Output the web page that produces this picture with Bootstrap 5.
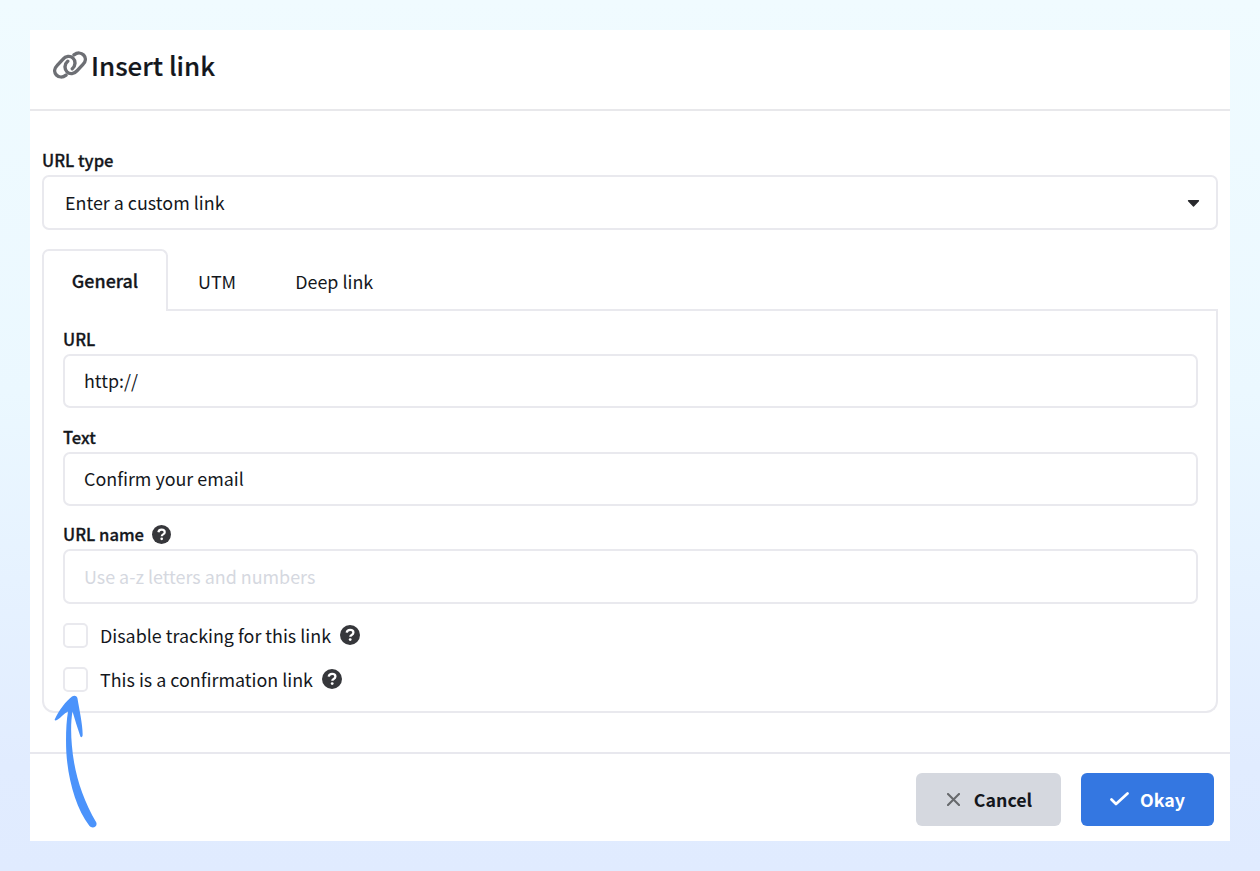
<!DOCTYPE html>
<html lang="en">
<head>
<meta charset="utf-8">
<meta name="viewport" content="width=device-width, initial-scale=1">
<title>Insert link</title>
<link href="https://cdn.jsdelivr.net/npm/bootstrap@5.3.0/dist/css/bootstrap.min.css" rel="stylesheet">
<style>
:root{--line:#e9e9ee;--ink:#14171c}
body{height:871px;padding:30px;overflow:hidden;color:var(--ink);font-family:"Noto Sans CJK SC",sans-serif;font-size:17.9px;line-height:26px;background:linear-gradient(180deg,#f0fbff 0%,#ebf8ff 45%,#e1ecff 88%,#e0ebff 100%)}
.dialog{height:811px;background:#fff}
.dialog-head{height:81px;padding:0 23px 9px;gap:4px;border-bottom:2px solid #e8e8eb}
.dialog-head h1{font-size:25.9px;font-weight:500;line-height:38px;-webkit-text-stroke:.2px}
.dialog-main{height:641px;padding:36px 12px 0}
.dialog-foot{height:89px;padding:4px 16px 0;gap:20px;border-top:2px solid #e8e8ee}
.field-label{display:flex;align-items:center;height:26px;margin-bottom:2px;font-size:16.6px;font-weight:500;gap:8px;-webkit-text-stroke:.3px}
.form-control,.form-select{height:54px;padding:0 20px 1px 19px;border:2px solid var(--line);border-radius:7px;color:var(--ink);font-size:17.9px;line-height:26px}
.tab-pane-box .form-control{width:1135px;padding-bottom:2px}
.tab-pane-box .name-input{height:55px}
.form-control::placeholder{color:#d5d8e0;opacity:1}
.form-select{height:55px;padding:0 21px 2px;background-image:none}
.caret{right:18px;top:24px}
.nav-tabs{margin-top:19px;border:0;height:62px}
.nav-tabs .nav-link{height:62px;border:2px solid transparent;border-radius:7px 7px 0 0;color:var(--ink);padding:2px 0 0 28px;font-size:17.9px}
.nav-tabs .nav-link.deep{padding-left:55px}
.nav-tabs .nav-link.active{width:126px;padding:0 0 2px;border-color:var(--line);border-bottom:0;font-weight:500;color:var(--ink);position:relative;z-index:1;-webkit-text-stroke:.3px}
.tab-pane-box{height:404px;margin-top:-2px;padding:17px 19px 0;border:2px solid var(--line);border-top:0;border-radius:0 0 12px 12px;background:linear-gradient(var(--line),var(--line)) 100% 0/calc(100% - 123px) 2px no-repeat}
.name-label{margin-top:15px}
.form-check .form-check-input{width:25px;height:25px;border:2px solid var(--line);border-radius:5px;margin:0;float:none}
.form-check{min-height:0;height:25px;padding:0;margin:19px 0 0;gap:8px}
.form-check label{margin:-1px 1px 0 4px}
.form-check svg{margin-top:-1px}
.btn{height:53px;border:0;border-radius:6px;font-size:17.8px;font-weight:700;padding:0}
.btn svg{margin-top:-1px}
.btn-cancel,.btn-cancel:hover{width:145px;padding-left:2px;background:#d5d8df;color:var(--ink);gap:14px}
.btn-okay,.btn-okay:hover{width:133px;background:#3477e1;color:#fff;gap:11px}
.pointer{left:50px;top:690px}
</style>
</head>
<body>
<svg class="d-none" xmlns="http://www.w3.org/2000/svg">
<symbol id="help" viewBox="0 0 20 20"><circle cx="10" cy="10" r="10" fill="#36373b"/><path d="M6.700 7.600C7 5.900 8.300 4.900 10.100 4.900c1.900 0 3.300 1 3.300 2.600 0 1.100-.6 1.800-1.700 2.400-.9.500-1.400.9-1.400 1.900" fill="none" stroke="#fff" stroke-width="2.300"/><circle cx="10.200" cy="14.600" r="1.400" fill="#fff"/></symbol>
</svg>
<div class="dialog">
  <header class="dialog-head d-flex align-items-center">
    <svg width="34" height="28" viewBox="0 0 34 28" fill="none" stroke="#6d6f74" stroke-width="3.400" stroke-linecap="round"><path d="M21 3.900C24.400 1.300 28.300 1.600 30.600 4c2.600 2.800 2.100 6.700-.6 9.400l-5.800 6.300c-2.900 3.400-7.400 3.900-10.200 1.200-2.900-2.800-2.600-7.900.7-10.700"/><path d="M13 24.100c-3.400 2.600-7.300 2.300-9.600-.1-2.600-2.800-2.100-6.700.6-9.400l5.800-6.300c2.900-3.400 7.400-3.900 10.200-1.200 2.900 2.800 2.600 7.900-.7 10.700"/></svg>
    <h1 class="m-0">Insert link</h1>
  </header>
  <main class="dialog-main">
    <label class="field-label" for="type">URL type</label>
    <div class="position-relative">
      <div id="type" class="form-select d-flex align-items-center">Enter a custom link</div>
      <svg class="caret position-absolute" width="13" height="9" viewBox="0 0 13 9"><path d="M1.500 1.700h10L6.500 7z" fill="#28292c" stroke="#28292c" stroke-width="1.300" stroke-linejoin="round"/></svg>
    </div>
    <ul class="nav nav-tabs">
      <li class="nav-item"><a class="nav-link active d-flex align-items-center justify-content-center">General</a></li>
      <li class="nav-item"><a class="nav-link d-flex align-items-center">UTM</a></li>
      <li class="nav-item"><a class="nav-link deep d-flex align-items-center">Deep link</a></li>
    </ul>
    <section class="tab-pane-box">
      <label class="field-label" for="url">URL</label>
      <input id="url" class="form-control" value="http://">
      <label class="field-label mt-3" for="text">Text</label>
      <input id="text" class="form-control" value="Confirm your email">
      <label class="field-label name-label" for="name">URL name <svg width="19" height="19"><use href="#help"/></svg></label>
      <input id="name" class="form-control name-input" placeholder="Use a-z letters and numbers">
      <div class="form-check d-flex align-items-center">
        <input class="form-check-input" type="checkbox" id="track"><label for="track">Disable tracking for this link</label><svg width="20" height="20"><use href="#help"/></svg>
      </div>
      <div class="form-check d-flex align-items-center">
        <input class="form-check-input" type="checkbox" id="confirm"><label for="confirm">This is a confirmation link</label><svg width="20" height="20"><use href="#help"/></svg>
      </div>
    </section>
  </main>
  <footer class="dialog-foot d-flex align-items-center justify-content-end">
    <button class="btn btn-cancel d-flex align-items-center justify-content-center"><svg width="13" height="13" viewBox="0 0 13 13" stroke="#67696d" stroke-width="2.100" stroke-linecap="round"><path d="M1 1l11 11M12 1L1 12"/></svg>Cancel</button>
    <button class="btn btn-okay d-flex align-items-center justify-content-center"><svg width="19" height="14" viewBox="0 0 19 14" fill="none" stroke="#fff" stroke-width="2.700" stroke-linecap="round" stroke-linejoin="round"><path d="M1.500 7.500l4.500 4.500L17.500 1.500"/></svg>Okay</button>
  </footer>
</div>
<svg class="pointer position-absolute" width="50" height="142" viewBox="0 0 50 142" fill="#4b93fb"><path d="M4.700 29.500C9 20 16 11 22 6.500c2.500-1.600 5-.8 5.500 2C29 18 33 36 32.600 45.500c-.5 2-1.700 2.200-2.300.8C27.500 38 25 30 22.500 21.500c-1.700 10-1.700 22-.6 34C24 82 32 108 46.300 132.500c1.500 4-3.800 7-7 3.300C26 118 18 90 16.300 62c-.6-13-.3-29 1.700-40.500-4 2-7 6-11 8.500-1.500.7-2.500.4-2.300-.5z"/></svg>
<script src="https://cdn.jsdelivr.net/npm/bootstrap@5.3.0/dist/js/bootstrap.bundle.min.js"></script>
</body>
</html>
